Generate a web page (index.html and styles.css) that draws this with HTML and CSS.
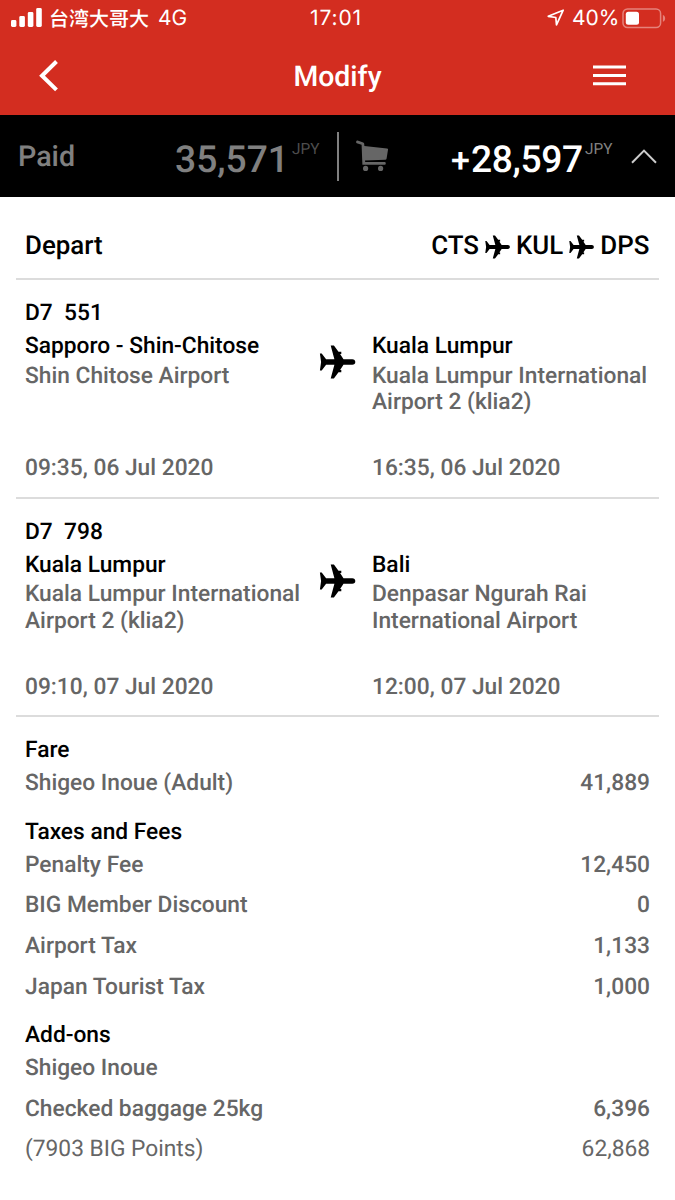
FILE: index.html
```html
<!DOCTYPE html>
<html lang="en">
<head>
<meta charset="utf-8">
<title>Modify</title>
<link rel="stylesheet" href="styles.css">
</head>
<body>
<svg class="defs" width="0" height="0" aria-hidden="true">
  <symbol id="plane" viewBox="0 0 36 34">
    <path d="M35.8 17c0 1.7-1.1 2.8-3 2.8H24L20.6 24.9h1.2v2.4h-2.8L14.4 33.5h-3.2L14.9 19.8H6.6L2.2 25.6H.4L1.6 17 .4 8.4h1.8l4.4 5.8h8.3L11.2.5h3.2L19 6.7h2.8v2.4h-1.2L24 14.2h8.8c1.9 0 3 1.1 3 2.8z"/>
  </symbol>
</svg>
<header class="header">
  <div class="status">
    <svg class="signal" viewBox="0 0 31 20"><rect y="12" width="5.4" height="7" rx="1.4"/><rect x="8.3" y="8" width="5.6" height="11" rx="1.4"/><rect x="16.8" y="4" width="5.6" height="15" rx="1.4"/><rect x="25.2" width="5.6" height="19" rx="1.4"/></svg>
    <span class="carrier">台湾大哥大</span>
    <span class="network">4G</span>
    <span class="clock">17:01</span>
    <svg class="location" viewBox="0 0 18 18"><path d="M16.2 1.2 1.2 7.3l7.6 1.2.7 7.3z"/></svg>
    <span class="percent">40%</span>
    <svg class="battery" viewBox="0 0 44 21"><rect class="shell" x="1" y="1" width="37.6" height="18.6" rx="4.5"/><rect class="charge" x="3.8" y="3.8" width="13.2" height="13" rx="2.5"/><path class="tip" d="M40.9 7c3 1 3 5.8 0 6.8z"/></svg>
  </div>
  <nav class="nav">
    <svg class="back" viewBox="0 0 20 32"><path d="M17.5 1.5 3 15.7l14.5 14.2"/></svg>
    <h1 class="title">Modify</h1>
    <svg class="menu" viewBox="0 0 33 21"><path d="M0 2h33M0 10.4h33M0 18.8h33"/></svg>
  </nav>
</header>
<section class="summary">
  <span class="paid">Paid</span>
  <span class="amount old">35,571</span><span class="currency old-currency">JPY</span>
  <span class="divider"></span>
  <svg class="cart" viewBox="0 0 33 32"><path d="M1.6.6 7.2 2.4q.8.3 1 1.4L8.4 6 31 8.4q1.2.2 1 1.3l-1.4 8.8q-.2 1.2-1.4 1.2L9 20.6l.2 1.4h19.4q1.2 0 1.2 1.4t-1.2 1.4H6.4L6.2 20 5.6 4.8.8 3.2Q-.2 2.6.2 1.4.6.3 1.6.6z"/><circle cx="9.6" cy="28.4" r="2.6"/><circle cx="24.6" cy="28.4" r="2.6"/></svg>
  <span class="amount new"><span class="plus">+</span>28,597</span><span class="currency new-currency">JPY</span>
  <svg class="chevron" viewBox="0 0 26 15"><path d="M1 13.8 13 1.6l12 12.2"/></svg>
</section>
<main class="details">
  <div class="route">
    <h2 class="depart">Depart</h2>
    <div class="codes"><span>CTS</span><svg class="mini"><use href="#plane"/></svg><span>KUL</span><svg class="mini"><use href="#plane"/></svg><span>DPS</span></div>
  </div>
  <section class="flight">
    <div class="number">D7&nbsp; 551</div>
    <div class="legs">
      <div class="place"><h3 class="city">Sapporo - Shin-Chitose</h3><p class="airport">Shin Chitose Airport</p><time class="date">09:35, 06 Jul 2020</time></div>
      <svg class="plane"><use href="#plane"/></svg>
      <div class="place"><h3 class="city">Kuala Lumpur</h3><p class="airport">Kuala Lumpur International<br>Airport 2 (klia2)</p><time class="date">16:35, 06 Jul 2020</time></div>
    </div>
  </section>
  <section class="flight">
    <div class="number">D7&nbsp; 798</div>
    <div class="legs">
      <div class="place"><h3 class="city">Kuala Lumpur</h3><p class="airport">Kuala Lumpur International<br>Airport 2 (klia2)</p><time class="date">09:10, 07 Jul 2020</time></div>
      <svg class="plane"><use href="#plane"/></svg>
      <div class="place"><h3 class="city">Bali</h3><p class="airport">Denpasar Ngurah Rai<br>International Airport</p><time class="date">12:00, 07 Jul 2020</time></div>
    </div>
  </section>
  <section class="prices">
    <div class="group">
      <h3 class="heading">Fare</h3>
      <div class="row"><span>Shigeo Inoue (Adult)</span><span>41,889</span></div>
    </div>
    <div class="group">
      <h3 class="heading">Taxes and Fees</h3>
      <div class="row"><span>Penalty Fee</span><span>12,450</span></div>
      <div class="row"><span>BIG Member Discount</span><span>0</span></div>
      <div class="row"><span>Airport Tax</span><span>1,133</span></div>
      <div class="row"><span>Japan Tourist Tax</span><span>1,000</span></div>
    </div>
    <div class="group">
      <h3 class="heading">Add-ons</h3>
      <div class="row"><span>Shigeo Inoue</span></div>
      <div class="row"><span>Checked baggage 25kg</span><span>6,396</span></div>
      <div class="row light"><span>(7903 BIG Points)</span><span>62,868</span></div>
    </div>
  </section>
</main>
</body>
</html>
```
FILE: styles.css
```css
* { box-sizing: border-box; margin: 0; padding: 0; }
body {
  width: 675px;
  height: 1200px;
  overflow: hidden;
  background: #fff;
  color: #000;
  font-family: Roboto, "Noto Sans CJK SC", sans-serif;
  font-size: 22.75px;
  font-weight: 500;
  text-rendering: geometricPrecision;
}
h1, h2, h3 { font-size: inherit; font-weight: 500; }
svg { display: block; flex: none; }
.defs { position: absolute; }
.header { height: 115px; background: #d32d20; color: #fff; }
.status {
  display: flex;
  align-items: center;
  height: 36px;
  padding: 0 9px 0 11px;
  font: 400 21px/36px Inter, "Noto Sans CJK SC", sans-serif;
  white-space: nowrap;
}
.signal { width: 31px; height: 20px; fill: #fff; }
.carrier { width: 109px; padding-left: 7px; font: 500 20px/36px "Noto Sans CJK SC", sans-serif; }
.network { width: 159px; padding: 1px 0 0 7px; }
.clock { width: 237px; padding-top: 1px; letter-spacing: 0.9px; }
.location { width: 18px; height: 18px; fill: none; stroke: #fff; stroke-width: 1.7; stroke-linejoin: round; }
.percent { width: 57px; padding: 1px 0 0 7px; }
.battery { width: 44px; height: 21px; }
.shell { fill: none; stroke: #e5837b; stroke-width: 1.5; }
.charge { fill: #fff; }
.tip { fill: #e5837b; }
.nav {
  display: grid;
  grid-template-columns: 43px 1fr 33px;
  align-items: center;
  height: 79px;
  padding: 0 49px 0 39px;
}
.back { width: 20px; height: 32px; fill: none; stroke: #fff; stroke-width: 4; }
.title { padding-top: 3px; font-size: 28.4px; line-height: 76px; text-align: center; }
.menu { width: 33px; height: 21px; stroke: #fff; stroke-width: 3; }
.summary {
  display: flex;
  align-items: flex-start;
  height: 82px;
  padding: 0 18px 0 18px;
  background: #000;
  white-space: nowrap;
}
.paid { width: 157px; color: #808080; font-size: 28.7px; line-height: 84px; }
.amount { font-size: 37.2px; line-height: 91px; }
.old { width: 117px; color: #808080; }
.currency { font-size: 15.4px; font-weight: 400; line-height: 68px; }
.old-currency { width: 45px; color: #4d4d4d; }
.divider { width: 2px; height: 49px; margin-top: 17px; background: #808080; }
.cart { width: 33px; height: 32px; margin: 25px 62px 0 17px; fill: #666; }
.new { width: 134px; color: #fff; letter-spacing: -0.35px; }
.plus { display: inline-block; width: 20px; font-size: 34px; }
.new-currency { width: 46px; color: #808080; }
.chevron { width: 26px; height: 15px; margin-top: 34px; fill: none; stroke: #ccc; stroke-width: 2; }
.details { padding: 0 16px; }
.route {
  display: flex;
  justify-content: space-between;
  height: 83px;
  padding: 0 9px;
  border-bottom: 2px solid #dcdcdc;
  font-size: 25.9px;
  line-height: 99px;
}
.codes { display: flex; align-items: center; height: 99px; padding-right: 0.6px; }
.mini { width: 25px; height: 24px; margin: 0 6px; }
.flight { height: 218.5px; padding: 16px 9px 0; border-bottom: 2px solid #dcdcdc; }
.number, .city, .heading { line-height: 33px; }
.legs { display: grid; grid-template-columns: 294px 53px 1fr; white-space: nowrap; }
.place { display: flex; flex-direction: column; }
.airport { height: 91px; padding-top: 0.7px; line-height: 26.5px; color: #666; }
.date { line-height: 30.4px; color: #666; }
.plane { width: 37px; height: 34px; margin-top: 16px; }
.prices { display: flex; flex-direction: column; gap: 15.5px; padding: 16.4px 9px 0; }
.group { display: flex; flex-direction: column; }
.row { display: flex; justify-content: space-between; line-height: 33px; color: #666; }
.row + .row { margin-top: 7.6px; }
.light { font-weight: 400; }
```
